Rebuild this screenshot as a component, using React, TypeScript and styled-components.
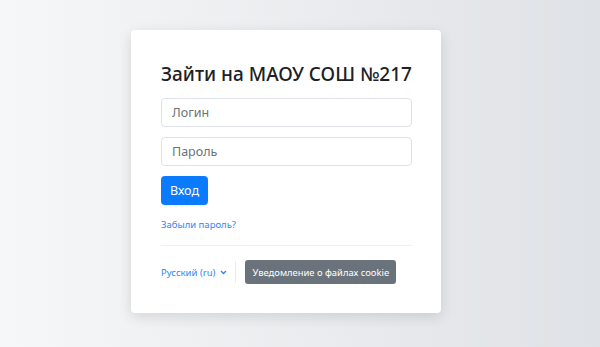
import React from "react";
import styled, {createGlobalStyle} from "styled-components";

const GlobalStyle = createGlobalStyle`
  html, body {
    margin: 0;
    padding: 0;
  }
  body {
    font-family: "Noto Sans", "Open Sans", "Liberation Sans", sans-serif;
    color: #1d2125;
  }
`

const Page = styled.div`
  width: 600px;
  height: 347px;
  background-image: linear-gradient(to right, #f6f7f8, #dfe2e6);
  display: flex;
  justify-content: center;
  padding: 30px 28px 0 0;
  box-sizing: border-box;
`

const Card = styled.div`
  width: 310px;
  height: 283px;
  background: #fff;
  border-radius: 4px;
  box-shadow: 0 4px 14px rgba(0, 0, 0, 0.12);
  padding: 29px 29px 0 30px;
  box-sizing: border-box;
  display: flex;
  flex-direction: column;
`

const Title = styled.h1`
  margin: 0 0 10px;
  font-size: 19px;
  font-weight: 500;
  line-height: 28px;
  padding-top: 1px;
  color: #1d2125;
  white-space: nowrap;
`

const Field = styled.input`
  width: 251px;
  height: 29px;
  box-sizing: border-box;
  border: 1px solid #dee2e6;
  border-radius: 4px;
  padding: 0 10px;
  margin-bottom: 10px;
  font-family: inherit;
  font-size: 12.5px;
  color: #495057;
  outline: none;

  &::placeholder {
    color: #6a737b;
  }
`

const LoginButton = styled.button`
  align-self: flex-start;
  width: 47px;
  height: 29px;
  border: none;
  border-radius: 4px;
  background: #0a7bff;
  color: #fff;
  font-family: inherit;
  font-size: 12.5px;
  padding: 0;
`

const Forgot = styled.a`
  margin-top: 12px;
  font-size: 9.5px;
  line-height: 15px;
  color: #2f86f0;
  text-decoration: none;
`

const Divider = styled.hr`
  width: 251px;
  margin: 13px 0 0;
  border: none;
  border-top: 1px solid #eef0f2;
`

const Footer = styled.div`
  display: flex;
  align-items: center;
  margin-top: 14px;
  height: 24px;
`

const Lang = styled.a`
  display: flex;
  align-items: center;
  gap: 5px;
  font-size: 9.5px;
  color: #2f86f0;
  text-decoration: none;
  padding-right: 8px;
  border-right: 1px solid #e9ecef;
  height: 22px;
`

const CookieButton = styled.button`
  margin-left: 9px;
  height: 24px;
  width: 151px;
  padding: 0;
  border: none;
  border-radius: 3px;
  background: #6a737b;
  color: #fff;
  font-family: inherit;
  font-size: 9.4px;
  white-space: nowrap;
`

const App = () => {
    return (
        <Page>
            <GlobalStyle/>
            <Card>
                <Title>Зайти на МАОУ СОШ №217</Title>
                <Field placeholder="Логин"/>
                <Field type="password" placeholder="Пароль"/>
                <LoginButton>Вход</LoginButton>
                <Forgot href="#">Забыли пароль?</Forgot>
                <Divider/>
                <Footer>
                    <Lang href="#">
                        Русский (ru)
                        <svg width="7" height="5" viewBox="0 0 7 5">
                            <path d="M1 1l2.5 2.5L6 1" fill="none" stroke="#2f86f0" strokeWidth="1.4"/>
                        </svg>
                    </Lang>
                    <CookieButton>Уведомление о файлах cookie</CookieButton>
                </Footer>
            </Card>
        </Page>
    )
}

export default App;
